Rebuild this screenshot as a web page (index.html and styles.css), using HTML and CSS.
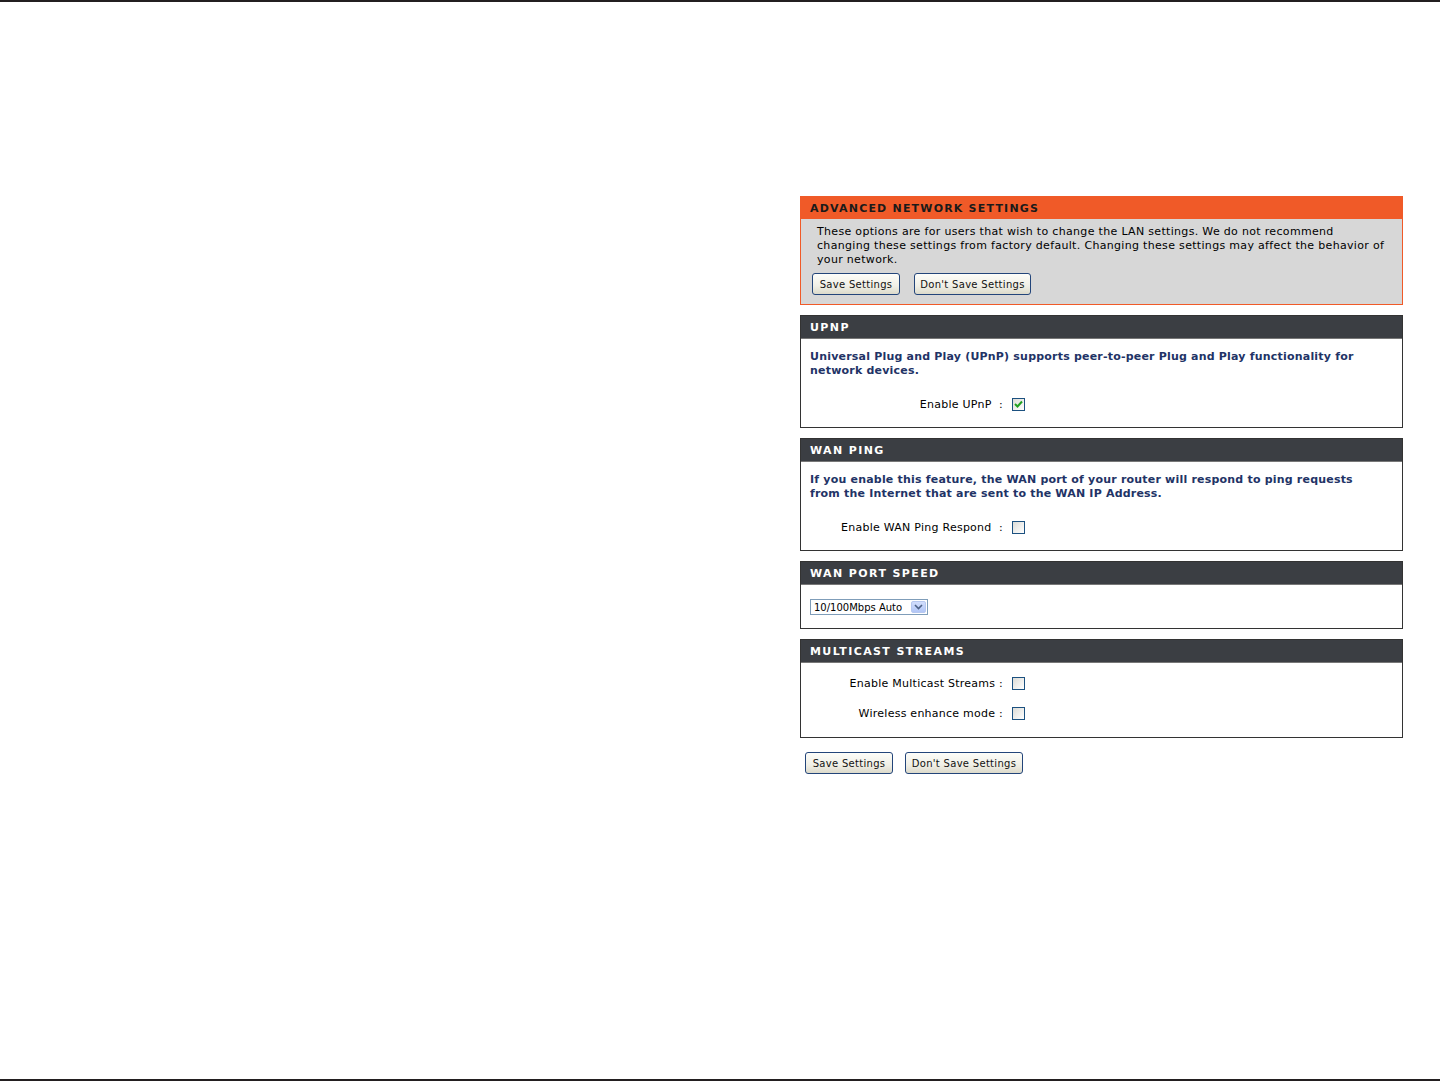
FILE: index.html
```html
<!DOCTYPE html>
<html>
<head>
  <title>Advanced Network</title>
  <link rel="stylesheet" href="styles.css">
</head>
<body>
  <div class="page">
    <div class="content">

      <div class="box box-orange">
        <h3 class="box-head">ADVANCED NETWORK SETTINGS</h3>
        <div class="box-body grey">
          <p class="intro">These options are for users that wish to change the LAN settings. We do not recommend changing these settings from factory default. Changing these settings may affect the behavior of your network.</p>
          <div class="btn-row">
            <button class="btn btn-save">Save Settings</button>
            <button class="btn btn-nosave">Don't Save Settings</button>
          </div>
        </div>
      </div>

      <div class="box">
        <h3 class="box-head">UPNP</h3>
        <div class="box-body">
          <p class="note">Universal Plug and Play (UPnP) supports peer-to-peer Plug and Play functionality for network devices.</p>
          <div class="field">
            <span class="label">Enable UPnP&nbsp; :</span>
            <span class="check">
              <svg width="9" height="8" viewBox="0 0 9 8"><path d="M1 4 L3.5 6.5 L8 1.5" fill="none" stroke="#21a121" stroke-width="2"/></svg>
            </span>
          </div>
        </div>
      </div>

      <div class="box">
        <h3 class="box-head">WAN PING</h3>
        <div class="box-body">
          <p class="note">If you enable this feature, the WAN port of your router will respond to ping requests from the Internet that are sent to the WAN IP Address.</p>
          <div class="field">
            <span class="label">Enable WAN Ping Respond&nbsp; :</span>
            <span class="check"></span>
          </div>
        </div>
      </div>

      <div class="box">
        <h3 class="box-head">WAN PORT SPEED</h3>
        <div class="box-body speed">
          <div class="select">
            <span class="select-text">10/100Mbps Auto</span>
            <span class="select-arrow">
              <svg width="9" height="6" viewBox="0 0 9 6"><path d="M1 1 L4.5 4.5 L8 1" fill="none" stroke="#4d6185" stroke-width="1.6"/></svg>
            </span>
          </div>
        </div>
      </div>

      <div class="box">
        <h3 class="box-head">MULTICAST STREAMS</h3>
        <div class="box-body rows">
          <div class="field">
            <span class="label">Enable Multicast Streams :</span>
            <span class="check"></span>
          </div>
          <div class="field">
            <span class="label">Wireless enhance mode :</span>
            <span class="check"></span>
          </div>
        </div>
      </div>

      <div class="btn-row bottom">
        <button class="btn btn-save">Save Settings</button>
        <button class="btn btn-nosave wide">Don't Save Settings</button>
      </div>

    </div>
  </div>
</body>
</html>
```

FILE: styles.css
```css
html, body {
  margin: 0;
  padding: 0;
  font-family: "DejaVu Sans", Verdana, sans-serif;
  font-size: 11px;
  background: #fff;
}

.page {
  height: 1081px;
  box-sizing: border-box;
  border-top: 2px solid #231f20;
  border-bottom: 2px solid #231f20;
  padding-top: 194px;
}

.content {
  width: 603px;
  margin-left: 800px;
  display: flex;
  flex-direction: column;
  gap: 10px;
}

.box {
  border: 1px solid #333;
  background: #fff;
}

.box-orange {
  border-color: #f05a28;
}

.box-head {
  margin: 0;
  height: 22px;
  line-height: 23px;
  padding-left: 9px;
  font-size: 11px;
  font-weight: bold;
  letter-spacing: 1.4px;
  color: #fff;
  background-color: #3b3e43;
  border-bottom: 1px solid #777;
}

.box-orange .box-head {
  color: #1a1a1a;
  background-color: #f05a28;
  border-bottom: none;
  letter-spacing: 1.2px;
}

.box-body {
  padding: 11px 24px 13px 9px;
}

.box-body.grey {
  background-color: #d7d7d7;
  padding: 6px 11px 9px;
}

.intro {
  margin: 0;
  padding-left: 5px;
  max-width: 571px;
  line-height: 14px;
  letter-spacing: 0.32px;
  color: #000;
}

.note {
  margin: 0 0 16px;
  line-height: 14px;
  font-weight: bold;
  letter-spacing: 0.2px;
  color: #223366;
}

.btn-row {
  display: flex;
  gap: 14px;
  margin-top: 6px;
}

.btn-row.bottom {
  margin-top: 4px;
  margin-left: 5px;
  gap: 12px;
}

.btn {
  height: 22px;
  padding: 0;
  font-family: "DejaVu Sans", Tahoma, sans-serif;
  font-size: 10px;
  letter-spacing: 0.3px;
  color: #111;
  border: 1px solid #23457a;
  border-radius: 3px;
  background: linear-gradient(#fdfdf9, #f0efe6 60%, #dcdacb);
  cursor: pointer;
}

.btn-save {
  width: 88px;
}

.btn-nosave {
  width: 117px;
}

.btn-nosave.wide {
  width: 118px;
}

.field {
  display: flex;
  align-items: center;
  height: 20px;
}

.label {
  width: 193px;
  flex-shrink: 0;
  text-align: right;
  letter-spacing: 0.25px;
  color: #000;
}

.check {
  margin-left: 9px;
  width: 11px;
  height: 11px;
  border: 1px solid #1c5180;
  background: linear-gradient(135deg, #dcdcd7, #fff);
  display: flex;
  align-items: center;
  justify-content: center;
}

.box-body.speed {
  padding: 14px 9px 13px;
}

.box-body.rows {
  display: flex;
  flex-direction: column;
  gap: 10px;
  padding: 10px 9px 14px;
}

.select {
  width: 116px;
  height: 14px;
  border: 1px solid #7f9db9;
  display: flex;
  align-items: center;
  justify-content: space-between;
  font-size: 10px;
  color: #000;
}

.select-text {
  padding-left: 3px;
}

.select-arrow {
  width: 15px;
  height: 12px;
  margin-right: 1px;
  border: 1px solid #b7c8f0;
  border-radius: 2px;
  box-sizing: border-box;
  background: linear-gradient(#d2defc, #b2c6f6);
  display: flex;
  align-items: center;
  justify-content: center;
}
```
